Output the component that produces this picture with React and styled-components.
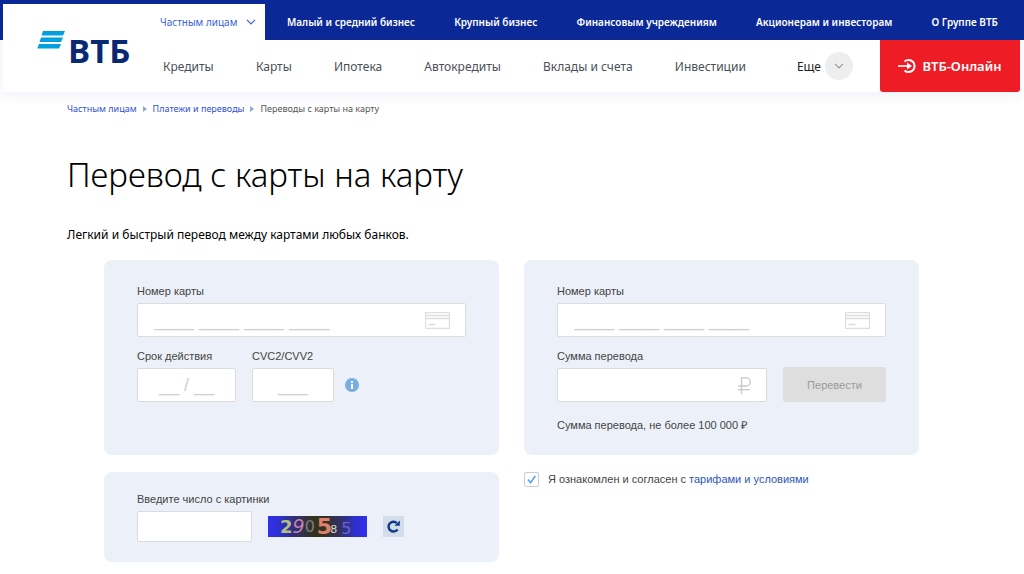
import React, { useState } from 'react'
import styled, { createGlobalStyle } from 'styled-components'

const GlobalStyle = createGlobalStyle`
  * {
    box-sizing: border-box;
  }
  body {
    margin: 0;
    background: #fff;
    color: #000;
    font-family: 'Noto Sans', 'Open Sans', sans-serif;
  }
  a {
    text-decoration: none;
  }
`

const Header = styled.header`
  padding: 0 4px 0 3px;
  background: linear-gradient(#0a2896, #0a2896) top / 100% 40px no-repeat;
`

const HeaderCard = styled.div`
  display: flex;
  border-top: 4px solid #0a2896;
  box-shadow: 0 3px 12px rgba(30, 60, 150, 0.08);
`

const LogoLink = styled.a`
  display: flex;
  align-items: flex-start;
  gap: 3px;
  width: 157px;
  padding: 27px 0 0 34px;
  background: #fff;
  color: #0a2973;
`

const LogoText = styled.span`
  font-family: 'Open Sans', sans-serif;
  font-size: 33px;
  line-height: 40px;
  font-weight: 700;
`

const Menus = styled.div`
  flex: 1;
`

const TopRow = styled.nav`
  display: flex;
  height: 36px;
`

const ActiveTab = styled.a`
  display: flex;
  align-items: center;
  gap: 9px;
  width: 105px;
  background: #fff;
  color: #3a5fd9;
  font-size: 10px;
  white-space: nowrap;
`

const TopList = styled.div`
  flex: 1;
  display: flex;
  align-items: center;
  justify-content: space-between;
  padding: 0 22px;
  background: #0a2896;
`

const TopLink = styled.a`
  color: #fff;
  font-size: 10px;
  font-weight: 600;
  white-space: nowrap;
`

const NavRow = styled.nav`
  display: flex;
  align-items: center;
  height: 52px;
  background: #fff;
`

const NavList = styled.div`
  flex: 1;
  display: flex;
  justify-content: space-between;
  padding: 0 51px 0 3px;
`

const NavLink = styled.a`
  color: #4b4f58;
  font-size: 12px;
  white-space: nowrap;
`

const MoreButton = styled.button`
  display: flex;
  align-items: center;
  gap: 4px;
  margin-right: 27px;
  padding: 0;
  border: 0;
  background: none;
  color: #222;
  font-family: inherit;
  font-size: 12px;
`

const Circle = styled.span`
  display: flex;
  align-items: center;
  justify-content: center;
  width: 28px;
  height: 28px;
  border-radius: 50%;
  background: #eee;
`

const OnlineLink = styled.a`
  display: flex;
  align-items: center;
  justify-content: center;
  gap: 5px;
  width: 140px;
  height: 100%;
  border-radius: 0 0 3px 3px;
  background: #ee1c25;
  color: #fff;
  font-size: 13px;
  font-weight: 600;
`

const Main = styled.main`
  padding: 10px 67px 12px;
`

const Crumbs = styled.nav`
  display: flex;
  align-items: center;
  gap: 6px;
  font-size: 9px;
  line-height: 14px;
  color: #555;

  a {
    color: #2f4fd0;
  }
`

const Title = styled.h1`
  margin: 35px 0 0;
  font-size: 33px;
  line-height: 48px;
  font-weight: 300;
`

const Intro = styled.p`
  margin: 27px 0 0;
  font-size: 12px;
  line-height: 18px;
`

const Form = styled.form`
  display: grid;
  grid-template-columns: repeat(2, minmax(0, 1fr));
  gap: 17px 25px;
  margin: 16px 38px 0 37px;
  font-family: 'Liberation Sans', Arial, sans-serif;
  font-size: 11px;
  color: #444;
`

const Panel = styled.section`
  min-height: ${(p) => (p.$small ? '90px' : '195px')};
  padding: ${(p) => (p.$small ? '20px' : '24px')} 33px 20px;
  border-radius: 8px;
  background: #ecf1f9;
`

const Row = styled.div`
  display: flex;
  align-items: flex-end;
  gap: 16px;
  margin-top: ${(p) => (p.$top ? '12px' : '0')};
`

const Field = styled.div`
  flex: ${(p) => (p.$width ? '0 0 ' + p.$width : '1')};
  min-width: 0;
`

const Label = styled.label`
  display: block;
  margin-bottom: 5px;
  line-height: 14px;
  white-space: nowrap;
`

const Box = styled.div`
  display: flex;
  align-items: center;
  height: ${(p) => (p.$low ? '31px' : '34px')};
  padding: 0 ${(p) => (p.$icon ? '15px' : '0')} 0 0;
  border: 1px solid #dcdcdc;
  border-radius: 2px;
  background: #fff;
`

const Input = styled.input`
  flex: 1;
  min-width: 0;
  width: 100%;
  height: 100%;
  padding: 0 ${(p) => (p.$center ? '0' : '16px')};
  border: 0;
  outline: 0;
  background: none;
  text-align: ${(p) => (p.$center ? 'center' : 'left')};
  font-family: 'Liberation Sans', Arial, sans-serif;
  font-size: 18px;
  color: #444;

  &::placeholder {
    color: #cfcfcf;
    opacity: 1;
  }
`

const InfoButton = styled.button`
  display: flex;
  align-items: center;
  height: 35px;
  margin-left: -5px;
  padding: 0;
  border: 0;
  background: none;
`

const SubmitButton = styled.button`
  flex: 0 0 103px;
  height: 35px;
  border: 0;
  border-radius: 2px;
  background: #dedede;
  color: #9b9b9b;
  font-family: inherit;
  font-size: 11px;
`

const Hint = styled.p`
  margin: 16px 0 0;
  line-height: 14px;
`

const Agreement = styled.div`
  display: flex;
  align-items: center;
  align-self: start;
  gap: 9px;
  line-height: 15px;

  a {
    color: #2c56b5;
  }
`

const Checkbox = styled.input`
  appearance: none;
  width: 15px;
  height: 15px;
  margin: 0;
  border: 1px solid #c9cdd3;
  border-radius: 2px;
  background: #fff;

  &:checked {
    background: url("data:image/svg+xml,%3Csvg xmlns='http://www.w3.org/2000/svg' viewBox='0 0 13 13'%3E%3Cpath d='M3 6.5l2.6 3.2L10.3 3' fill='none' stroke='%235aa2e6' stroke-width='1.7'/%3E%3C/svg%3E");
  }
`

const Captcha = styled.div`
  display: flex;
  align-items: center;
  padding-left: 12px;
  width: 99px;
  height: 21px;
  margin-bottom: 5px;
  background: linear-gradient(90deg, #3030ee 0%, #2f2fce 12%, #30306c 28%, #33331a 46%, #33331c 56%, #30306c 74%, #2f2fce 88%, #3030ee 100%);
  font-family: 'DejaVu Sans', sans-serif;
  line-height: 21px;
`

const Digit = styled.span`
  color: ${(p) => p.$color};
  font-size: ${(p) => p.$size};
  font-weight: ${(p) => (p.$bold ? 700 : 400)};
  font-style: ${(p) => (p.$italic ? 'italic' : 'normal')};
  margin-left: ${(p) => p.$gap || '0'};
  padding-top: ${(p) => p.$drop || '0'};
`

const RefreshButton = styled.button`
  display: flex;
  align-items: center;
  justify-content: center;
  width: 21px;
  height: 21px;
  margin-bottom: 5px;
  padding: 0;
  border: 0;
  background: #d3dde9;
`

const topLinks = ['Малый и средний бизнес', 'Крупный бизнес', 'Финансовым учреждениям', 'Акционерам и инвесторам', 'О Группе ВТБ']
const navLinks = ['Кредиты', 'Карты', 'Ипотека', 'Автокредиты', 'Вклады и счета', 'Инвестиции']

const digits = [
  { char: '2', color: '#b5bd84', size: '18px', bold: true },
  { char: '9', color: '#c77fc0', size: '19px', italic: true },
  { char: '0', color: '#7c7c84', size: '16px' },
  { char: '5', color: '#e0806c', size: '22px', bold: true, gap: '2px' },
  { char: '8', color: '#d8d8c4', size: '11px', gap: '-2px', drop: '6px' },
  { char: '5', color: '#6a62c8', size: '16px', gap: '4px', drop: '3px' },
]

const Chevron = ({ color }) => (
  <svg width="10" height="6" viewBox="0 0 10 6" fill="none" stroke={color} strokeWidth="1.2">
    <path d="M1 .8l4 4 4-4" />
  </svg>
)

const CrumbArrow = () => (
  <svg width="4" height="6" viewBox="0 0 4 6" fill="#8aa8dc">
    <path d="M0 0l4 3-4 3z" />
  </svg>
)

const CardIcon = () => (
  <svg width="25" height="17" viewBox="0 0 25 17" fill="none" stroke="#dedede">
    <path d="M.5.5h24v16H.5zM1 3.500h23M1 6.500h23M3.500 12.500h7" strokeWidth="1.3" />
  </svg>
)

function CardNumber({ id }) {
  return (
    <Field>
      <Label htmlFor={id}>Номер карты</Label>
      <Box $icon>
        <Input id={id} placeholder="____ ____ ____ ____" />
        <CardIcon />
      </Box>
    </Field>
  )
}

export default function App() {
  const [agree, setAgree] = useState(true)

  return (
    <>
      <GlobalStyle />
      <Header>
        <HeaderCard>
          <LogoLink href="#" aria-label="ВТБ">
            <svg width="28" height="18" viewBox="0 0 28 18" fill="#009fdf">
              <path d="M6 0h22l-2 4.500H4.500zM4 6.500h22l-2 4.500H2.500zM2 13h22l-2 4.500H.3z" />
            </svg>
            <LogoText>ВТБ</LogoText>
          </LogoLink>
          <Menus>
            <TopRow>
              <ActiveTab href="#">
                Частным лицам
                <Chevron color="#3a5fd9" />
              </ActiveTab>
              <TopList>
                {topLinks.map((item) => (
                  <TopLink href="#" key={item}>{item}</TopLink>
                ))}
              </TopList>
            </TopRow>
            <NavRow>
              <NavList>
                {navLinks.map((item) => (
                  <NavLink href="#" key={item}>{item}</NavLink>
                ))}
              </NavList>
              <MoreButton>
                Еще
                <Circle><Chevron color="#999" /></Circle>
              </MoreButton>
              <OnlineLink href="#">
                <svg width="19" height="16" viewBox="0 0 19 16" fill="none" stroke="#fff" strokeWidth="2">
                  <path d="M6.500 3.600A6 6 0 1 1 6.500 12.400" />
                  <path d="M0 8h11" strokeWidth="1.6" />
                  <path d="M9 4.500L14 8l-5 3.500V8z" fill="#fff" stroke="none" />
                </svg>
                ВТБ-Онлайн
              </OnlineLink>
            </NavRow>
          </Menus>
        </HeaderCard>
      </Header>

      <Main>
        <Crumbs>
          <a href="#">Частным лицам</a>
          <CrumbArrow />
          <a href="#">Платежи и переводы</a>
          <CrumbArrow />
          <span>Переводы с карты на карту</span>
        </Crumbs>
        <Title>Перевод с карты на карту</Title>
        <Intro>Легкий и быстрый перевод между картами любых банков.</Intro>

        <Form onSubmit={(e) => e.preventDefault()}>
          <Panel>
            <CardNumber id="from" />
            <Row $top>
              <Field $width="99px">
                <Label htmlFor="date">Срок действия</Label>
                <Box><Input id="date" $center placeholder="__ / __" /></Box>
              </Field>
              <Field $width="82px">
                <Label htmlFor="cvc">CVC2/CVV2</Label>
                <Box><Input id="cvc" $center placeholder="___" /></Box>
              </Field>
              <InfoButton type="button" aria-label="Что такое CVC2/CVV2">
                <svg width="14" height="14" viewBox="0 0 14 14">
                  <circle cx="7" cy="7" r="7" fill="#7aaee0" />
                  <path d="M6 3h2v2H6zM6 6h2v5H6z" fill="#fff" />
                </svg>
              </InfoButton>
            </Row>
          </Panel>

          <Panel>
            <CardNumber id="to" />
            <Row $top>
              <Field>
                <Label htmlFor="sum">Сумма перевода</Label>
                <Box $icon>
                  <Input id="sum" />
                  <svg width="13" height="17" viewBox="0 0 13 17" fill="none" stroke="#c8c8c8" strokeWidth="1.3">
                    <path d="M3.500 17V.8h4.700a3.900 3.900 0 0 1 0 8.200H0M0 12.700h12" />
                  </svg>
                </Box>
              </Field>
              <SubmitButton disabled>Перевести</SubmitButton>
            </Row>
            <Hint>Сумма перевода, не более 100 000 ₽</Hint>
          </Panel>

          <Panel $small>
            <Row>
              <Field $width="115px">
                <Label htmlFor="captcha">Введите число с картинки</Label>
                <Box $low><Input id="captcha" /></Box>
              </Field>
              <Captcha>
                {digits.map((d, i) => (
                  <Digit key={i} $color={d.color} $size={d.size} $bold={d.bold} $italic={d.italic} $gap={d.gap} $drop={d.drop}>
                    {d.char}
                  </Digit>
                ))}
              </Captcha>
              <RefreshButton type="button" aria-label="Обновить">
                <svg width="13" height="13" viewBox="0 0 13 13">
                  <path d="M10.600 9.300A4.900 4.900 0 1 1 9.800 3" fill="none" stroke="#0f3a8c" strokeWidth="2.400" />
                  <path d="M12.800.4v5.400H7.400z" fill="#0f3a8c" />
                </svg>
              </RefreshButton>
            </Row>
          </Panel>

          <Agreement>
            <Checkbox id="agree" type="checkbox" checked={agree} onChange={() => setAgree(!agree)} />
            <label htmlFor="agree">
              Я ознакомлен и согласен с <a href="#">тарифами и условиями</a>
            </label>
          </Agreement>
        </Form>
      </Main>
    </>
  )
}
